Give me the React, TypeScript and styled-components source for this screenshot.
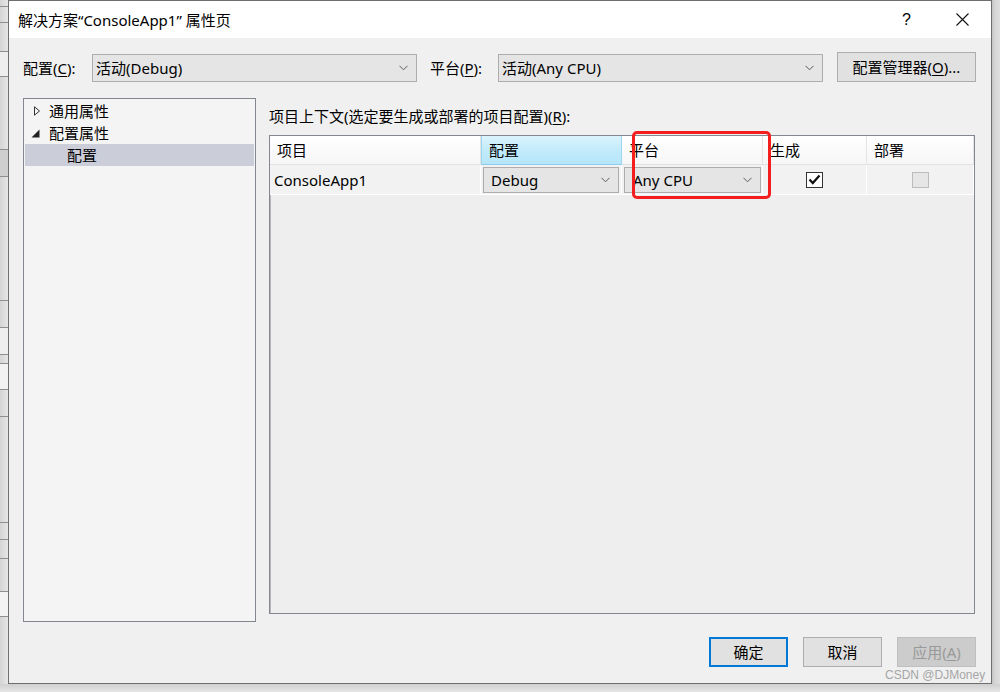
import React from "react";
import styled, { createGlobalStyle } from "styled-components";

const FONT = `"Noto Sans", "Noto Sans CJK SC", sans-serif`;

const Global = createGlobalStyle`
  html, body { margin: 0; padding: 0; width: 1000px; height: 692px; overflow: hidden; background: #e4e4e4; }
  body { font-family: ${FONT}; font-size: 15px; color: #000; }
  * { box-sizing: border-box; }
`;

const Screen = styled.div`
  position: relative;
  width: 1000px;
  height: 692px;
  display: flex;
  flex-direction: column;
`;

const TopRow = styled.div`
  display: flex;
  height: 684px;
`;

const LeftStrip = styled.div`
  width: 8px;
  display: flex;
  flex-direction: column;
  background: linear-gradient(90deg, #d4d4d4, #e6e6e6);
`;

const StripBand = styled.div<{ $h: number; $tone?: string }>`
  height: ${(p) => p.$h}px;
  flex: none;
  border-bottom: 1px solid #8e8e8e;
  background: ${(p) => p.$tone || "transparent"};
`;

const RightStrip = styled.div`
  width: 8px;
  background: linear-gradient(90deg, #c4c4c4 0px, #d6d6d6 3px, #dedede 8px);
`;

const BottomStrip = styled.div`
  height: 8px;
  background: linear-gradient(180deg, #cfcfcf, #e6e6e6);
`;

const Dialog = styled.div`
  width: 984px;
  height: 684px;
  border: 1px solid #6e6e6e;
  display: flex;
  flex-direction: column;
  background: #f0f0f0;
`;

const TitleBar = styled.div`
  height: 37px;
  flex: none;
  background: #ffffff;
  display: flex;
  align-items: center;
  padding-left: 9px;
`;

const TitleText = styled.div`
  flex: 1;
  font-size: 15px;
  line-height: 20px;
`;

const HelpGlyph = styled.div`
  width: 20px;
  margin-right: 33px;
  font-family: "Liberation Sans", sans-serif;
  font-size: 16px;
  line-height: 20px;
`;

const CloseGlyph = styled.div`
  width: 36px;
  display: flex;
  align-items: center;
  padding-left: 1px;
`;

const Body = styled.div`
  flex: 1;
  display: flex;
  flex-direction: column;
  padding: 14px 15px 0 14px;
`;

const ConfigRow = styled.div`
  display: flex;
  align-items: flex-end;
  height: 30px;
`;

const FieldLabel = styled.div<{ $w: number }>`
  width: ${(p) => p.$w}px;
  flex: none;
  line-height: 28px;
  height: 28px;
`;

const U = styled.span`
  text-decoration: underline;
  text-underline-offset: 2px;
`;

const Combo = styled.div<{ $w?: string; $h?: number }>`
  width: ${(p) => p.$w || "325px"};
  height: ${(p) => p.$h || 28}px;
  flex: none;
  background: #e5e5e5;
  border: 1px solid #adadad;
  display: flex;
  align-items: center;
  justify-content: space-between;
  padding: 0 8px 0 3px;
  line-height: 20px;
`;

const CellCombo = styled(Combo)`
  padding: 0 8px 0 7px;
`;

const Button = styled.div<{ $w: number; $primary?: boolean; $disabled?: boolean }>`
  width: ${(p) => p.$w}px;
  height: 30px;
  flex: none;
  display: flex;
  align-items: center;
  justify-content: center;
  background: ${(p) => (p.$disabled ? "#cccccc" : "#e1e1e1")};
  border: ${(p) =>
    p.$primary ? "2px solid #0078d7" : p.$disabled ? "1px solid #bfbfbf" : "1px solid #adadad"};
  color: ${(p) => (p.$disabled ? "#999999" : "#000")};
  line-height: 20px;
`;

const Gap = styled.div<{ $w: number }>`
  width: ${(p) => p.$w}px;
  flex: none;
`;

const MainRow = styled.div`
  display: flex;
  margin-top: 16px;
  height: 524px;
  gap: 13px;
`;

const TreePanel = styled.div`
  width: 233px;
  height: 524px;
  border: 1px solid #828790;
  background: #f4f4f4;
  padding: 1px;
  display: flex;
  flex-direction: column;
`;

const TreeItem = styled.div<{ $level: number; $selected?: boolean }>`
  height: 22px;
  display: flex;
  align-items: center;
  padding-left: ${(p) => (p.$level === 0 ? 8 : 42)}px;
  background: ${(p) => (p.$selected ? "#cbcdd9" : "transparent")};
  line-height: 20px;
`;

const Expander = styled.div`
  width: 16px;
  height: 22px;
  display: flex;
  align-items: center;
  flex: none;
`;

const RightSide = styled.div`
  width: 706px;
  display: flex;
  flex-direction: column;
`;

const ContextLabel = styled.div`
  margin-top: 8px;
  line-height: 20px;
  height: 20px;
`;

const GridBox = styled.div`
  position: relative;
  margin-top: 9px;
  height: 479px;
  border: 1px solid #828790;
  box-shadow: inset 1px 1px 0 #b9b9b9;
  background: #eeeeee;
`;

const GridRow = styled.div<{ $h: number }>`
  display: grid;
  grid-template-columns: 211px 141px 141px 104px 1fr;
  height: ${(p) => p.$h}px;
`;

const HeadCell = styled.div<{ $active?: boolean }>`
  display: flex;
  align-items: center;
  padding-left: 7px;
  line-height: 20px;
  background: ${(p) =>
    p.$active ? "linear-gradient(180deg, #dcf4fd 0%, #c2ebfb 50%, #b6e6fa 100%)" : "linear-gradient(180deg, #ffffff, #f6f6f7)"};
  border-right: 1px solid ${(p) => (p.$active ? "#9fd6ef" : "#e4e4e4")};
  border-left: ${(p) => (p.$active ? "1px solid #9fd6ef" : "none")};
  border-bottom: 1px solid ${(p) => (p.$active ? "#8dcdeb" : "#e2e2e2")};
`;

const DataCell = styled.div<{ $center?: boolean }>`
  display: flex;
  align-items: center;
  justify-content: ${(p) => (p.$center ? "center" : "flex-start")};
  background: #f2f2f2;
  border-right: 1px solid #ffffff;
  border-bottom: 1px solid #ffffff;
  padding: ${(p) => (p.$center ? "0" : "0 0 0 4px")};
  line-height: 20px;
`;

const ComboCell = styled(DataCell)`
  padding: 0 2px 0 2px;
`;

const CheckBox = styled.div<{ $disabled?: boolean }>`
  width: 17px;
  height: 16px;
  border: 1px solid ${(p) => (p.$disabled ? "#bcbcbc" : "#333333")};
  background: ${(p) => (p.$disabled ? "#e6e6e6" : "#ffffff")};
  display: flex;
  align-items: center;
  justify-content: center;
`;

const Highlight = styled.div`
  position: absolute;
  left: 362px;
  top: -5px;
  width: 139px;
  height: 68px;
  border: 3px solid #f41e1e;
  border-radius: 5px;
  pointer-events: none;
`;

const ButtonRow = styled.div`
  display: flex;
  justify-content: flex-end;
  margin-top: 15px;
  gap: 15px;
`;

const Watermark = styled.div`
  position: absolute;
  left: 885px;
  top: 667px;
  font-family: "Liberation Sans", Arial, sans-serif;
  font-size: 12px;
  line-height: 16px;
  color: #a6a6a6;
`;

const Chevron = () => (
  <svg width="9" height="6" viewBox="0 0 9 6">
    <path d="M0.5 0.8 L4.5 4.8 L8.5 0.8" fill="none" stroke="#5a5a5a" strokeWidth="1" />
  </svg>
);

const bands: { h: number; tone?: string }[] = [
  { h: 7 },
  { h: 16 },
  { h: 29 },
  { h: 25, tone: "#eeeeee" },
  { h: 73 },
  { h: 27, tone: "#cfcfcf" },
  { h: 124 },
  { h: 27 },
  { h: 27, tone: "#eeeeee" },
  { h: 9 },
  { h: 26, tone: "#f2f2f2" },
  { h: 27 },
  { h: 106 },
  { h: 17 },
  { h: 19 },
  { h: 33 },
  { h: 25, tone: "#f3f3f3" },
];

export default function App() {
  return (
    <Screen>
      <Global />
      <TopRow>
        <LeftStrip>
          {bands.map((b, i) => (
            <StripBand key={i} $h={b.h} $tone={b.tone} />
          ))}
        </LeftStrip>
        <Dialog>
          <TitleBar>
            <TitleText>解决方案“ConsoleApp1” 属性页</TitleText>
            <HelpGlyph>?</HelpGlyph>
            <CloseGlyph>
              <svg width="13" height="13" viewBox="0 0 13 13">
                <path d="M0.5 0.5 L12.5 12.5 M12.5 0.5 L0.5 12.5" stroke="#111" strokeWidth="1.1" fill="none" />
              </svg>
            </CloseGlyph>
          </TitleBar>
          <Body>
            <ConfigRow>
              <FieldLabel $w={69}>
                配置(<U>C</U>):
              </FieldLabel>
              <Combo>
                <span>活动(Debug)</span>
                <Chevron />
              </Combo>
              <Gap $w={13} />
              <FieldLabel $w={68}>
                平台(<U>P</U>):
              </FieldLabel>
              <Combo>
                <span>活动(Any CPU)</span>
                <Chevron />
              </Combo>
              <Gap $w={14} />
              <Button $w={139}>
                配置管理器(<U>O</U>)...
              </Button>
            </ConfigRow>
            <MainRow>
              <TreePanel>
                <TreeItem $level={0}>
                  <Expander>
                    <svg width="8" height="10" viewBox="0 0 8 10">
                      <path d="M1.5 0.8 L6.5 5 L1.5 9.2 Z" fill="none" stroke="#333" strokeWidth="1" />
                    </svg>
                  </Expander>
                  通用属性
                </TreeItem>
                <TreeItem $level={0}>
                  <Expander>
                    <svg width="9" height="9" viewBox="0 0 9 9" style={{ marginLeft: -2 }}>
                      <path d="M8.5 0.5 L8.5 8.5 L0.5 8.5 Z" fill="#222" />
                    </svg>
                  </Expander>
                  配置属性
                </TreeItem>
                <TreeItem $level={1} $selected>
                  配置
                </TreeItem>
              </TreePanel>
              <RightSide>
                <ContextLabel>
                  项目上下文(选定要生成或部署的项目配置)(<U>R</U>):
                </ContextLabel>
                <GridBox>
                  <GridRow $h={29}>
                    <HeadCell>项目</HeadCell>
                    <HeadCell $active>配置</HeadCell>
                    <HeadCell>平台</HeadCell>
                    <HeadCell>生成</HeadCell>
                    <HeadCell>部署</HeadCell>
                  </GridRow>
                  <GridRow $h={30}>
                    <DataCell>ConsoleApp1</DataCell>
                    <ComboCell>
                      <CellCombo $w="100%" $h={26}>
                        <span>Debug</span>
                        <Chevron />
                      </CellCombo>
                    </ComboCell>
                    <ComboCell>
                      <CellCombo $w="137px" $h={26}>
                        <span style={{ marginLeft: 1 }}>Any CPU</span>
                        <Chevron />
                      </CellCombo>
                    </ComboCell>
                    <DataCell $center>
                      <CheckBox>
                        <svg width="13" height="11" viewBox="0 0 13 11">
                          <path d="M1.5 5.5 L4.8 9 L11.5 1.5" fill="none" stroke="#111" strokeWidth="2.2" />
                        </svg>
                      </CheckBox>
                    </DataCell>
                    <DataCell $center>
                      <CheckBox $disabled />
                    </DataCell>
                  </GridRow>
                  <Highlight />
                </GridBox>
              </RightSide>
            </MainRow>
            <ButtonRow>
              <Button $w={79} $primary>
                确定
              </Button>
              <Button $w={79}>取消</Button>
              <Button $w={79} $disabled>
                应用(<U>A</U>)
              </Button>
            </ButtonRow>
          </Body>
        </Dialog>
        <RightStrip />
      </TopRow>
      <BottomStrip />
      <Watermark>CSDN @DJMoney</Watermark>
    </Screen>
  );
}
